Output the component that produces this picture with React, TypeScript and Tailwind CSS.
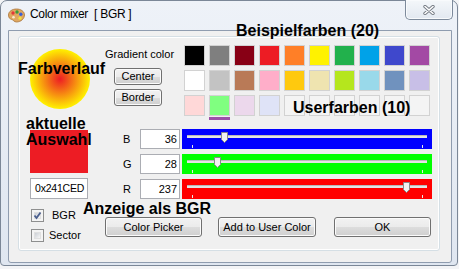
import React from "react";

const row1 = [
  "bg-[#000000]", "bg-[#7f7f7f]", "bg-[#880015]", "bg-[#ed1c24]", "bg-[#ff7f27]",
  "bg-[#fff200]", "bg-[#22b14c]", "bg-[#00a2e8]", "bg-[#3f48cc]", "bg-[#a349a4]",
];
const row2 = [
  "bg-[#ffffff]", "bg-[#c3c3c3]", "bg-[#b97a57]", "bg-[#ffaec9]", "bg-[#ffc90e]",
  "bg-[#efe4b0]", "bg-[#b5e61d]", "bg-[#99d9ea]", "bg-[#7092be]", "bg-[#c8bfe7]",
];
const row3 = [
  "bg-[#ffd8d8]", "bg-[#80ff80]", "bg-[#ecd8ec]", "bg-[#dfe3f7]", "bg-[#f4f4f4]",
  "bg-[#f4f4f4]", "bg-[#f4f4f4]", "bg-[#f4f4f4]", "bg-[#f4f4f4]", "bg-[#f4f4f4]",
];

const btn =
  "border border-[#707070] rounded-[3px] bg-[linear-gradient(#f2f2f2,#ebebeb_50%,#dddddd_50%,#cfcfcf)] shadow-[inset_0_0_0_1px_#fbfbfb] flex items-center justify-center text-[11px] text-black leading-none";

function Thumb() {
  return (
    <svg width="7" height="11" viewBox="0 0 7 11">
      <path d="M0.5 0.5 H6.5 V7.5 L3.5 10.5 L0.5 7.5 Z" fill="#f2f2f2" stroke="#8a8a8a" />
    </svg>
  );
}

function Slider({ bg, value }: { bg: string; value: number }) {
  const left = 10 + (value / 255) * 230 - 3;
  return (
    <div className={`relative w-[250px] h-[20px] ${bg}`}>
      <div className="absolute left-[5px] right-[5px] top-[6px] h-[3px] bg-[#e4e4e4] border-t border-[#b9b9b9]" />
      <div className="absolute left-[10px] top-[16px] w-px h-[3px] bg-[#e6e6e6]" />
      <div className="absolute left-[240px] top-[16px] w-px h-[3px] bg-[#e6e6e6]" />
      <div className="absolute top-[3px] leading-none flex" style={{ left }}>
        <Thumb />
      </div>
    </div>
  );
}

function Check({ checked }: { checked: boolean }) {
  return (
    <div className="w-[13px] h-[13px] border border-[#8e8f8f] bg-[#f4f4f4] p-[2px]">
      <div className="w-full h-full bg-[linear-gradient(135deg,#cbcfd5,#f6f6f6)] border border-[#e0e0e0] flex items-center justify-center">
        {checked && (
          <svg width="9" height="9" viewBox="0 0 9 9" className="-m-[2px]">
            <path d="M1.5 4.5 L3.5 7 L7.5 1.5" fill="none" stroke="#4b5f8e" strokeWidth="1.8" />
          </svg>
        )}
      </div>
    </div>
  );
}

export default function App() {
  return (
    <div className="w-[459px] h-[269px] bg-[#f3f4f6] relative overflow-hidden font-['Liberation_Sans',Arial,sans-serif] text-black">
      <div className="w-[458px] h-[266px] rounded-t-[7px] rounded-b-[4px] border border-[#7b8797] bg-[linear-gradient(#eef2f8,#dfe6f0)] flex flex-col">
        {/* title bar */}
        <div className="h-[29px] flex items-start">
          <div className="ml-[7px] mt-[7px]">
            <svg width="17" height="15" viewBox="0 0 17 15">
              <path d="M8.5 1 C13 1 16.5 3.5 16.5 7 C16.5 10.5 13 14 8.5 14 C6 14 5.5 12 4 11.5 C2 11 0.5 10 0.5 7 C0.5 3.5 4 1 8.5 1 Z" fill="#e0a860" stroke="#a8733a" strokeWidth="0.8" />
              <circle cx="5" cy="5" r="1.7" fill="#e23a3a" />
              <circle cx="9" cy="4" r="1.7" fill="#3a9a3a" />
              <circle cx="12.8" cy="6.2" r="1.7" fill="#3a5fd8" />
              <circle cx="12" cy="10.2" r="1.6" fill="#f0e040" />
              <circle cx="5.5" cy="9.2" r="1.3" fill="#fbe9cf" />
            </svg>
          </div>
          <div className="ml-[5px] mt-[6px] text-[12px] leading-[15px] tracking-[-0.3px] whitespace-pre text-black">
            Color mixer  [ BGR ]
          </div>
          <div className="ml-auto mr-[4px] -mt-px w-[48px] h-[20px] border border-t-0 border-[#7d8a9b] rounded-b-[5px] bg-[linear-gradient(#f4f7fa,#e2e8f0)] shadow-[inset_0_0_0_1px_#f8fafc] flex items-center justify-center">
            <svg width="12" height="10" viewBox="0 0 12 10">
              <path d="M2 1.5 L10 8.5 M10 1.5 L2 8.5" stroke="#757b84" strokeWidth="3.4" strokeLinecap="round" />
              <path d="M2 1.5 L10 8.5 M10 1.5 L2 8.5" stroke="#ffffff" strokeWidth="1.6" strokeLinecap="round" />
            </svg>
          </div>
        </div>

        {/* client area */}
        <div className="ml-[7px] w-[444px] h-[233px] border border-[#8f9caf] rounded-b-[3px] bg-[#f0f0f0]">
          <div className="ml-[9px] mt-[5px] w-[422px] h-[215px] border border-[#d5dfe5] rounded-[3px] shadow-[inset_0_0_0_1px_#ffffff] flex flex-col">
            {/* row A */}
            <div className="h-[92px] flex items-start">
              <div className="ml-[11px] mt-[12px] w-[60px] h-[60px] rounded-full bg-[radial-gradient(circle_closest-side,#ed1c24_0%,#fff200_100%)]" />
              <div className="ml-[15px] mt-[11px] w-[66px] flex flex-col">
                <div className="text-[11px] leading-[13px] whitespace-nowrap">Gradient color</div>
                <div className={`${btn} ml-[9px] mt-[7px] w-[48px] h-[17px]`}>Center</div>
                <div className={`${btn} ml-[9px] mt-[4px] w-[48px] h-[17px]`}>Border</div>
              </div>
              <div className="ml-[13px] mt-[8px] grid grid-cols-[repeat(10,21px)] gap-[4px]">
                {row1.map((c, i) => (
                  <div key={"a" + i} className={`w-[21px] h-[21px] border border-[#d2d2d2] ${c}`} />
                ))}
                {row2.map((c, i) => (
                  <div key={"b" + i} className={`w-[21px] h-[21px] border border-[#d2d2d2] ${c}`} />
                ))}
                {row3.map((c, i) => (
                  <div key={"c" + i} className={`relative w-[21px] h-[21px] border border-[#d2d2d2] ${c}`}>
                    {i === 1 && <div className="absolute left-[-1px] right-[-1px] top-[21px] h-[3px] bg-[#9c4fa8]" />}
                  </div>
                ))}
              </div>
            </div>

            {/* row B */}
            <div className="h-[70px] flex items-start">
              <div className="ml-[11px] flex flex-col">
                <div className="mt-[1px] w-[58px] h-[43px] bg-[#ed1c24]" />
                <div className="mt-[5px] w-[58px] h-[21px] border border-[#abadb3] bg-white text-[10.5px] leading-[19px] pl-[4px] tracking-[-0.2px]">0x241CED</div>
              </div>
              <div className="ml-[35px] flex flex-col gap-[5px]">
                {[
                  { l: "B", v: "36", bg: "bg-[#0000ff]", n: 36 },
                  { l: "G", v: "28", bg: "bg-[#00ff00]", n: 28 },
                  { l: "R", v: "237", bg: "bg-[#ff0000]", n: 237 },
                ].map((r) => (
                  <div key={r.l} className="flex items-center h-[20px]">
                    <div className="w-[17px] text-[11px] leading-none">{r.l}</div>
                    <div className="w-[40px] h-[20px] border border-[#abadb3] bg-white text-[11px] leading-[18px] text-right pr-[2px]">{r.v}</div>
                    <div className="ml-[2px]">
                      <Slider bg={r.bg} value={r.n} />
                    </div>
                  </div>
                ))}
              </div>
            </div>

            {/* row C */}
            <div className="mt-[10px] flex items-start">
              <div className="ml-[12px] w-[74px] flex flex-col gap-[7px]">
                <div className="flex items-center h-[13px]">
                  <Check checked={true} />
                  <span className="ml-[8px] text-[11px] leading-none">BGR</span>
                </div>
                <div className="flex items-center h-[13px]">
                  <Check checked={false} />
                  <span className="ml-[5px] text-[11px] leading-none">Sector</span>
                </div>
              </div>
              <div className={`${btn} mt-[8px] w-[97px] h-[20px]`}>Color Picker</div>
              <div className={`${btn} mt-[8px] ml-[16px] w-[98px] h-[20px]`}>Add to User Color</div>
              <div className={`${btn} mt-[8px] ml-[18px] w-[97px] h-[20px]`}>OK</div>
            </div>
          </div>
        </div>
      </div>

      {/* annotation overlays */}
      <div className="absolute left-[18px] top-[61px] text-[16px] leading-[16px] font-bold whitespace-nowrap">Farbverlauf</div>
      <div className="absolute left-[236px] top-[23px] text-[16px] leading-[16px] font-bold whitespace-nowrap">Beispielfarben (20)</div>
      <div className="absolute left-[293px] top-[100px] text-[16px] leading-[16px] font-bold whitespace-nowrap">Userfarben (10)</div>
      <div className="absolute left-[26px] top-[116px] text-[16px] leading-[16px] font-bold whitespace-nowrap">aktuelle</div>
      <div className="absolute left-[26px] top-[132px] text-[16px] leading-[16px] font-bold whitespace-nowrap">Auswahl</div>
      <div className="absolute left-[83px] top-[201px] text-[16px] leading-[16px] font-bold whitespace-nowrap">Anzeige als BGR</div>
    </div>
  );
}
